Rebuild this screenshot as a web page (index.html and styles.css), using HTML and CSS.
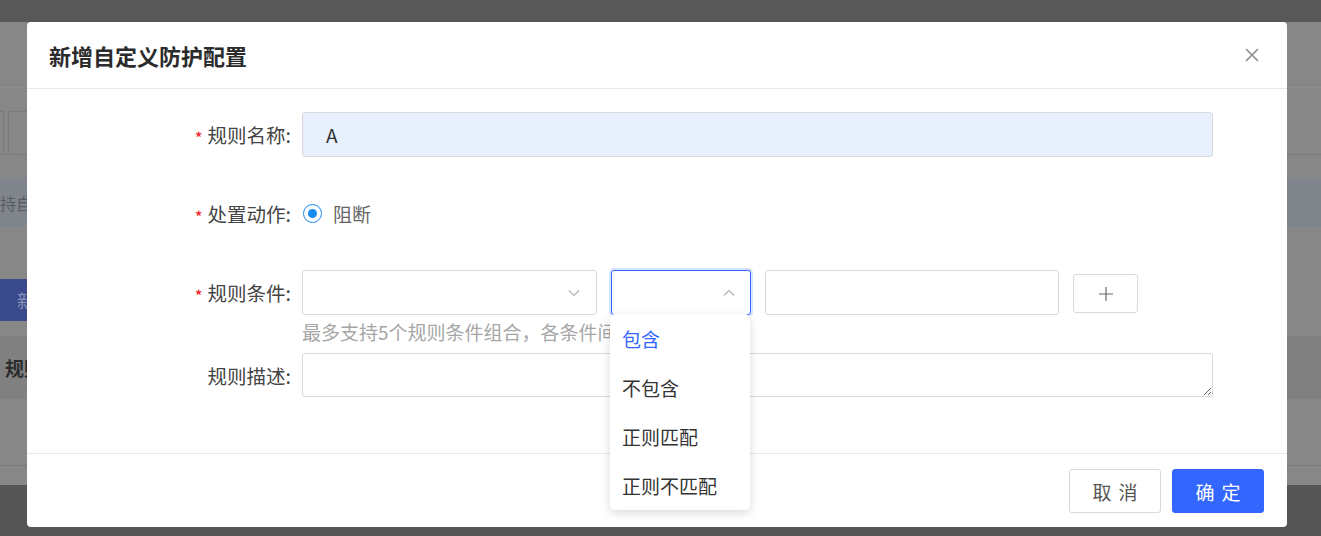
FILE: index.html
```html
<!DOCTYPE html>
<html lang="zh-CN">
<head>
    <meta charset="UTF-8">
    <title>新增自定义防护配置</title>
    <link rel="stylesheet" href="styles.css">
</head>
<body>
<div class="page">
    <div class="topbar"></div>
    <div class="page-main">
        <div class="toolbar"></div>
        <div class="tabs">
            <div class="tab tab-first"></div>
            <div class="tab"></div>
        </div>
        <div class="alert">持自定义防护规则配置</div>
        <div class="actions">
            <div class="btn-add">新增</div>
        </div>
        <div class="table-head">规则列表</div>
        <div class="table-row"></div>
    </div>
    <div class="page-bottom"></div>
</div>

<div class="modal">
    <div class="modal-header">
        <h2 class="modal-title">新增自定义防护配置</h2>
        <svg class="modal-close" width="14" height="14" viewBox="0 0 14 14">
            <path d="M1 1L13 13M13 1L1 13" stroke="#8c8c8c" stroke-width="1.6" fill="none"/>
        </svg>
    </div>

    <div class="modal-body">
        <div class="form-item">
            <label class="form-label"><span class="req">*</span>规则名称:</label>
            <div class="form-control">
                <div class="input input-filled">A</div>
            </div>
        </div>

        <div class="form-item">
            <label class="form-label"><span class="req">*</span>处置动作:</label>
            <div class="form-control radio-row">
                <span class="radio"><span class="radio-dot"></span></span>
                <span class="radio-text">阻断</span>
            </div>
        </div>

        <div class="form-item form-item-cond">
            <label class="form-label"><span class="req">*</span>规则条件:</label>
            <div class="form-control">
                <div class="cond-row">
                    <div class="input select select-field">
                        <svg width="12" height="8" viewBox="0 0 12 8"><path d="M1 1.5L6 6.5L11 1.5" stroke="#b3b3b3" stroke-width="1.2" fill="none"/></svg>
                    </div>
                    <div class="select-wrap">
                        <div class="input select select-op">
                            <svg width="12" height="8" viewBox="0 0 12 8"><path d="M1 6.5L6 1.5L11 6.5" stroke="#b3b3b3" stroke-width="1.2" fill="none"/></svg>
                        </div>
                        <ul class="dropdown">
                            <li class="active">包含</li>
                            <li>不包含</li>
                            <li>正则匹配</li>
                            <li>正则不匹配</li>
                        </ul>
                    </div>
                    <div class="input select-value"></div>
                    <div class="btn-plus">
                        <svg width="14" height="14" viewBox="0 0 14 14"><path d="M7 0V14M0 7H14" stroke="#666" stroke-width="1.2"/></svg>
                    </div>
                </div>
                <div class="help">最多支持5个规则条件组合，各条件间</div>
            </div>
        </div>

        <div class="form-item">
            <label class="form-label">规则描述:</label>
            <div class="form-control">
                <textarea class="textarea"></textarea>
            </div>
        </div>
    </div>

    <div class="modal-footer">
        <button class="btn">取消</button>
        <button class="btn btn-primary">确定</button>
    </div>
</div>
</body>
</html>
```

FILE: styles.css
```css
body {
    margin: 0;
    font-family: "Noto Sans CJK SC", "Noto Sans", sans-serif;
    overflow: hidden;
}
.page {
    height: 536px;
    display: flex;
    flex-direction: column;
}
.topbar {
    height: 22px;
    background: #585858;
}
.page-main {
    height: 463px;
    background: #878787;
}
.toolbar {
    height: 65px;
    border-bottom: 1px solid #8e8e8e;
}
.tabs {
    display: flex;
    gap: 4px;
    margin-top: 23px;
    height: 43px;
    border-bottom: 1px solid #7a7a7a;
}
.tab {
    width: 80px;
    border: 1px solid #7b7b7b;
    border-bottom: none;
}
.tab-first {
    width: 3px;
    border-left: none;
}
.alert {
    margin-top: 23px;
    height: 48px;
    line-height: 48px;
    background: #7f858b;
    border-top: 1px solid #858b90;
    border-bottom: 1px solid #858b90;
    color: #585c60;
    font-size: 16px;
}
.actions {
    margin-top: 51px;
    height: 42px;
}
.btn-add {
    width: 90px;
    height: 42px;
    line-height: 42px;
    padding-left: 17px;
    background: #3a4a8c;
    color: #8a93b8;
    font-size: 18px;
}
.table-head {
    margin-top: 15px;
    height: 63px;
    line-height: 63px;
    background: #808080;
    padding-left: 5px;
    font-size: 19px;
    font-weight: bold;
    color: #2c2c2c;
}
.table-row {
    height: 66px;
    border-bottom: 1px solid #7a7a7a;
}
.page-bottom {
    flex: 1;
    background: #555;
}

/* modal */
.modal {
    position: absolute;
    left: 27px;
    top: 22px;
    width: 1260px;
    height: 505px;
    background: #fff;
    border-radius: 4px;
    display: flex;
    flex-direction: column;
}
.modal-header {
    height: 66px;
    padding: 0 28px 0 22px;
    border-bottom: 1px solid #e8e8e8;
    display: flex;
    align-items: center;
    justify-content: space-between;
}
.modal-title {
    margin: 0;
    font-size: 22px;
    font-weight: bold;
    color: #2b2b2b;
}
.modal-body {
    flex: 1;
    padding-top: 23px;
}
.form-item {
    display: flex;
    margin-bottom: 34px;
}
.form-item-cond {
    margin-bottom: 7px;
}
.form-label {
    width: 264px;
    padding-right: 11px;
    height: 45px;
    line-height: 45px;
    text-align: right;
    font-size: 19.5px;
    color: #444;
}
.req {
    color: #f5222d;
    font-size: 17px;
    margin-right: 5px;
    vertical-align: -2px;
}
.form-control {
    width: 911px;
}
.input {
    box-sizing: border-box;
    height: 45px;
    border: 1px solid #d9d9d9;
    border-radius: 3px;
    background: #fff;
}
.input-filled {
    background: #e8f0fe;
    padding-left: 23px;
    line-height: 43px;
    font-size: 19px;
    color: #333;
}
.radio-row {
    display: flex;
    align-items: center;
    height: 45px;
}
.radio {
    box-sizing: border-box;
    width: 19px;
    height: 19px;
    margin-left: 1px;
    border: 1.5px solid #1a8cf0;
    border-radius: 50%;
    display: flex;
    align-items: center;
    justify-content: center;
}
.radio-dot {
    width: 9px;
    height: 9px;
    border-radius: 50%;
    background: #1a8cf0;
}
.radio-text {
    margin-left: 11px;
    font-size: 19px;
    color: #666;
}
.cond-row {
    display: flex;
    align-items: flex-start;
    gap: 14px;
}
.select {
    display: flex;
    align-items: center;
    justify-content: flex-end;
    padding-right: 16px;
}
.select-field {
    width: 295px;
}
.select-wrap {
    position: relative;
}
.select-op {
    width: 140px;
    border-color: #3366ff;
    box-shadow: 0 0 0 2px #d6e4ff;
    padding-right: 15px;
}
.select-value {
    width: 294px;
}
.btn-plus {
    box-sizing: border-box;
    width: 65px;
    height: 39px;
    margin-top: 4px;
    border: 1px solid #d9d9d9;
    border-radius: 3px;
    display: flex;
    align-items: center;
    justify-content: center;
}
.dropdown {
    position: absolute;
    left: -1px;
    top: 44px;
    width: 140px;
    margin: 0;
    padding: 0;
    list-style: none;
    background: #fff;
    border-radius: 5px;
    box-shadow: 0 3px 10px rgba(0, 0, 0, 0.15);
    z-index: 2;
}
.dropdown li {
    height: 49px;
    line-height: 49px;
    padding-left: 12px;
    font-size: 19px;
    color: #333;
}
.dropdown li.active {
    color: #3366ff;
}
.help {
    margin-top: 3px;
    line-height: 28px;
    font-size: 19px;
    color: #a6a6a6;
}
.textarea {
    display: block;
    box-sizing: border-box;
    width: 911px;
    height: 44px;
    border: 1px solid #d9d9d9;
    border-radius: 3px;
    font-family: inherit;
}
.modal-footer {
    height: 58px;
    padding: 15px 23px 0 0;
    border-top: 1px solid #e8e8e8;
    display: flex;
    justify-content: flex-end;
    gap: 11px;
}
.btn {
    width: 92px;
    height: 44px;
    border: 1px solid #d9d9d9;
    border-radius: 3px;
    background: #fff;
    color: #555;
    font-family: inherit;
    font-size: 19px;
    letter-spacing: 7px;
    text-indent: 7px;
}
.btn-primary {
    background: #3366ff;
    border-color: #3366ff;
    color: #fff;
}
```
